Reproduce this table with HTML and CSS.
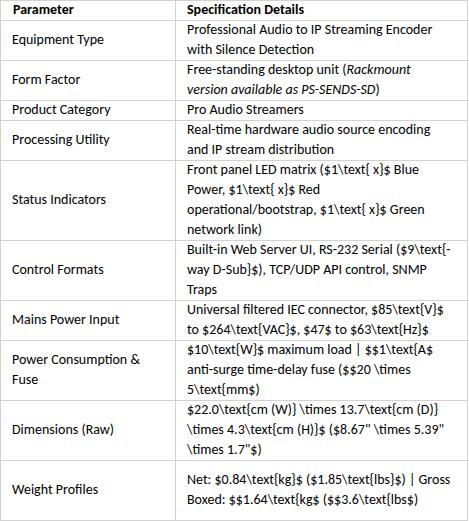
FILE: index.html
```html
<!DOCTYPE html>
<html lang="en">
<head>
<meta charset="utf-8">
<title>Specification</title>
<link rel="stylesheet" href="styles.css">
</head>
<body>
<div class="spec">
  <div class="cell key head">Parameter</div>
  <div class="cell val head">Specification Details</div>

  <div class="cell key">Equipment Type</div>
  <div class="cell val"><div>Professional Audio to IP Streaming Encoder<br>with Silence Detection</div></div>

  <div class="cell key">Form Factor</div>
  <div class="cell val"><div>Free-standing desktop unit (<em>Rackmount</em><br><em>version available as PS-SENDS-SD</em>)</div></div>

  <div class="cell key">Product Category</div>
  <div class="cell val"><div>Pro Audio Streamers</div></div>

  <div class="cell key">Processing Utility</div>
  <div class="cell val"><div>Real-time hardware audio source encoding<br>and IP stream distribution</div></div>

  <div class="cell key">Status Indicators</div>
  <div class="cell val"><div>Front panel LED matrix ($1\text{ x}$ Blue<br>Power, $1\text{ x}$ Red<br>operational/bootstrap, $1\text{ x}$ Green<br>network link)</div></div>

  <div class="cell key">Control Formats</div>
  <div class="cell val"><div>Built-in Web Server UI, RS-232 Serial ($9\text{-<br>way D-Sub}$), TCP/UDP API control, SNMP<br>Traps</div></div>

  <div class="cell key">Mains Power Input</div>
  <div class="cell val"><div>Universal filtered IEC connector, $85\text{V}$<br>to $264\text{VAC}$, $47$ to $63\text{Hz}$</div></div>

  <div class="cell key"><div>Power Consumption &amp;<br>Fuse</div></div>
  <div class="cell val"><div>$10\text{W}$ maximum load | $$1\text{A$<br>anti-surge time-delay fuse ($$20 \times<br>5\text{mm$)</div></div>

  <div class="cell key">Dimensions (Raw)</div>
  <div class="cell val"><div>$22.0\text{cm (W)} \times 13.7\text{cm (D)}<br>\times 4.3\text{cm (H)}$ ($8.67" \times 5.39"<br>\times 1.7"$)</div></div>

  <div class="cell key tall">Weight Profiles</div>
  <div class="cell val tall"><div>Net: $0.84\text{kg}$ ($1.85\text{lbs}$) | Gross<br>Boxed: $$1.64\text{kg$ ($$3.6\text{lbs$)</div></div>
</div>
</body>
</html>
```

FILE: styles.css
```css
html, body {
  margin: 0;
  padding: 0;
  background: #ffffff;
}

.spec {
  display: grid;
  grid-template-columns: 175px 292px;
  width: 467px;
  border-right: 1px solid #d2d2d2;
  border-bottom: 1px solid #d2d2d2;
  font-family: Carlito, Calibri, Lato, "Liberation Sans", sans-serif;
  font-size: 14px;
  line-height: 20px;
  color: #000000;
}

.cell {
  display: flex;
  align-items: center;
  padding: 0 0 0 12px;
  white-space: nowrap;
  box-shadow: inset 1px 1px 0 #d2d2d2;
}

.cell.head {
  font-weight: 700;
  height: 20px;
}

.cell.key.head {
  padding-left: 13px;
}

.cell.tall {
  height: 60px;
}

.cell em {
  font-style: italic;
}
```
